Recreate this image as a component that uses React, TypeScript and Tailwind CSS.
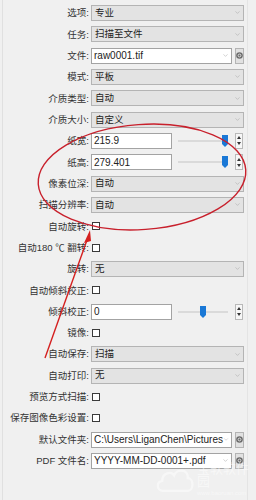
import { ChevronDown } from "lucide-react";

type Row =
  | { kind: "select"; label: string; value: string }
  | { kind: "file"; label: string; value: string }
  | { kind: "slider"; label: string; value: string; pos: number }
  | { kind: "check"; label: string };

const rows: Row[] = [
  { kind: "select", label: "选项", value: "专业" },
  { kind: "select", label: "任务", value: "扫描至文件" },
  { kind: "file", label: "文件", value: "raw0001.tif" },
  { kind: "select", label: "模式", value: "平板" },
  { kind: "select", label: "介质类型", value: "自动" },
  { kind: "select", label: "介质大小", value: "自定义" },
  { kind: "slider", label: "纸宽", value: "215.9", pos: 44 },
  { kind: "slider", label: "纸高", value: "279.401", pos: 44 },
  { kind: "select", label: "像素位深", value: "自动" },
  { kind: "select", label: "扫描分辨率", value: "自动" },
  { kind: "check", label: "自动旋转" },
  { kind: "check", label: "自动180 ℃ 翻转" },
  { kind: "select", label: "旋转", value: "无" },
  { kind: "check", label: "自动倾斜校正" },
  { kind: "slider", label: "倾斜校正", value: "0", pos: 22 },
  { kind: "check", label: "镜像" },
  { kind: "select", label: "自动保存", value: "扫描" },
  { kind: "select", label: "自动打印", value: "无" },
  { kind: "check", label: "预览方式扫描" },
  { kind: "check", label: "保存图像色彩设置" },
  { kind: "file", label: "默认文件夹", value: "C:\\Users\\LiganChen\\Pictures" },
  { kind: "file", label: "PDF 文件名", value: "YYYY-MM-DD-0001+.pdf" },
];

const AtButton = () => (
  <div className="ml-[3px] w-[9px] h-[16px] bg-[#e1e1e1] border border-[#b4b4b4] flex items-center justify-center">
    <svg width="7" height="7" viewBox="0 0 7 7">
      <circle cx="3.5" cy="3.5" r="3.3" fill="#6b6b6b" />
      <circle cx="3.5" cy="3.5" r="1.4" fill="none" stroke="#e6e6e6" strokeWidth="0.9" />
    </svg>
  </div>
);

const Spinner = () => (
  <div className="ml-[7px] w-[8px] h-[16px] bg-[#f7f7f7] border border-[#b9b9b9] flex flex-col items-center justify-around py-[1px]">
    <svg width="4" height="3" viewBox="0 0 4 3">
      <path d="M0 3 L2 0 L4 3 Z" fill="#333" />
    </svg>
    <svg width="4" height="3" viewBox="0 0 4 3">
      <path d="M0 0 L2 3 L4 0 Z" fill="#333" />
    </svg>
  </div>
);

const Slider = ({ pos }: { pos: number }) => (
  <div className="relative ml-[6px] w-[50px] h-[16px]">
    <div className="absolute left-0 right-0 top-[7px] h-[2px] bg-[#dadada]" />
    <svg className="absolute top-[2px]" style={{ left: pos }} width="6" height="12" viewBox="0 0 6 12">
      <path d="M0 0 H6 V9 L3 12 L0 9 Z" fill="#1a78d6" />
    </svg>
  </div>
);

function Control({ row }: { row: Row }) {
  if (row.kind === "select")
    return (
      <div className="w-[153px] h-[16px] bg-[#e3e3e3] border border-[#b4b4b4] flex items-center justify-between pl-[3px] pr-[2px]">
        <span>{row.value}</span>
        <ChevronDown size={7} color="#999" strokeWidth={1.5} />
      </div>
    );
  if (row.kind === "file")
    return (
      <div className="flex items-center">
        <div className="w-[141px] h-[16px] bg-white border border-[#a3a3a3] flex items-center justify-between pl-[2px] pr-[2px]">
          <span className="whitespace-nowrap text-[10px]">{row.value}</span>
          <ChevronDown size={7} color="#999" strokeWidth={1.5} />
        </div>
        <AtButton />
      </div>
    );
  if (row.kind === "slider")
    return (
      <div className="flex items-center">
        <div className="w-[81px] h-[16px] bg-white border border-[#a3a3a3] flex items-center pl-[2px] text-[10px]">
          {row.value}
        </div>
        <Slider pos={row.pos} />
        <Spinner />
      </div>
    );
  return <div className="ml-[1px] w-[8px] h-[8px] bg-white border border-[#3a3a3a]" />;
}

export default function App() {
  return (
    <div
      className="relative w-[256px] h-[500px] overflow-hidden bg-[#f0f0f0] text-[9.5px] text-[#222]"
      style={{ fontFamily: '"Liberation Sans", "Noto Sans CJK SC", sans-serif' }}
    >
      <div className="absolute left-[2px] top-0 bottom-0 w-px bg-[#e0e0e0]" />
      <div className="absolute left-[247px] top-0 bottom-0 w-px bg-[#e4e4e4]" />

      <div className="flex flex-col pt-[2.33px]">
        {rows.map((row) => (
          <div key={row.label} className="h-[21.33px] flex items-center">
            <div className="w-[89px] text-right whitespace-nowrap leading-none text-[#333]">{row.label}:</div>
            <div className="ml-[2px]">
              <Control row={row} />
            </div>
          </div>
        ))}
      </div>

      {/* red annotation */}
      <svg className="absolute left-0 top-0 pointer-events-none" width="256" height="500" viewBox="0 0 256 500">
        <ellipse cx="142" cy="177" rx="104" ry="52.5" fill="none" stroke="#c8202c" strokeWidth="1.4" transform="rotate(-4 142 177)" />
        <line x1="45" y1="358" x2="87" y2="240" stroke="#d42020" strokeWidth="1.4" />
        <path d="M90 230 L84 243 L91 241 Z" fill="#d42020" />
      </svg>

      {/* watermark */}
      <div className="absolute left-[155px] top-[462px] flex items-center opacity-50">
        <svg width="44" height="34" viewBox="0 0 44 34">
          <path d="M8 30 C2 30 1 20 8 19 C8 10 18 8 21 13 C24 5 37 6 36 16 C43 16 43 30 36 30 Z" fill="none" stroke="#ffffff" strokeWidth="2.5" />
        </svg>
        <div className="ml-[2px] flex flex-col text-white">
          <span className="text-[13px] leading-none">宝软软件园</span>
          <span className="text-[6px] leading-none mt-[2px]">www.baoruan.com</span>
        </div>
      </div>
    </div>
  );
}
